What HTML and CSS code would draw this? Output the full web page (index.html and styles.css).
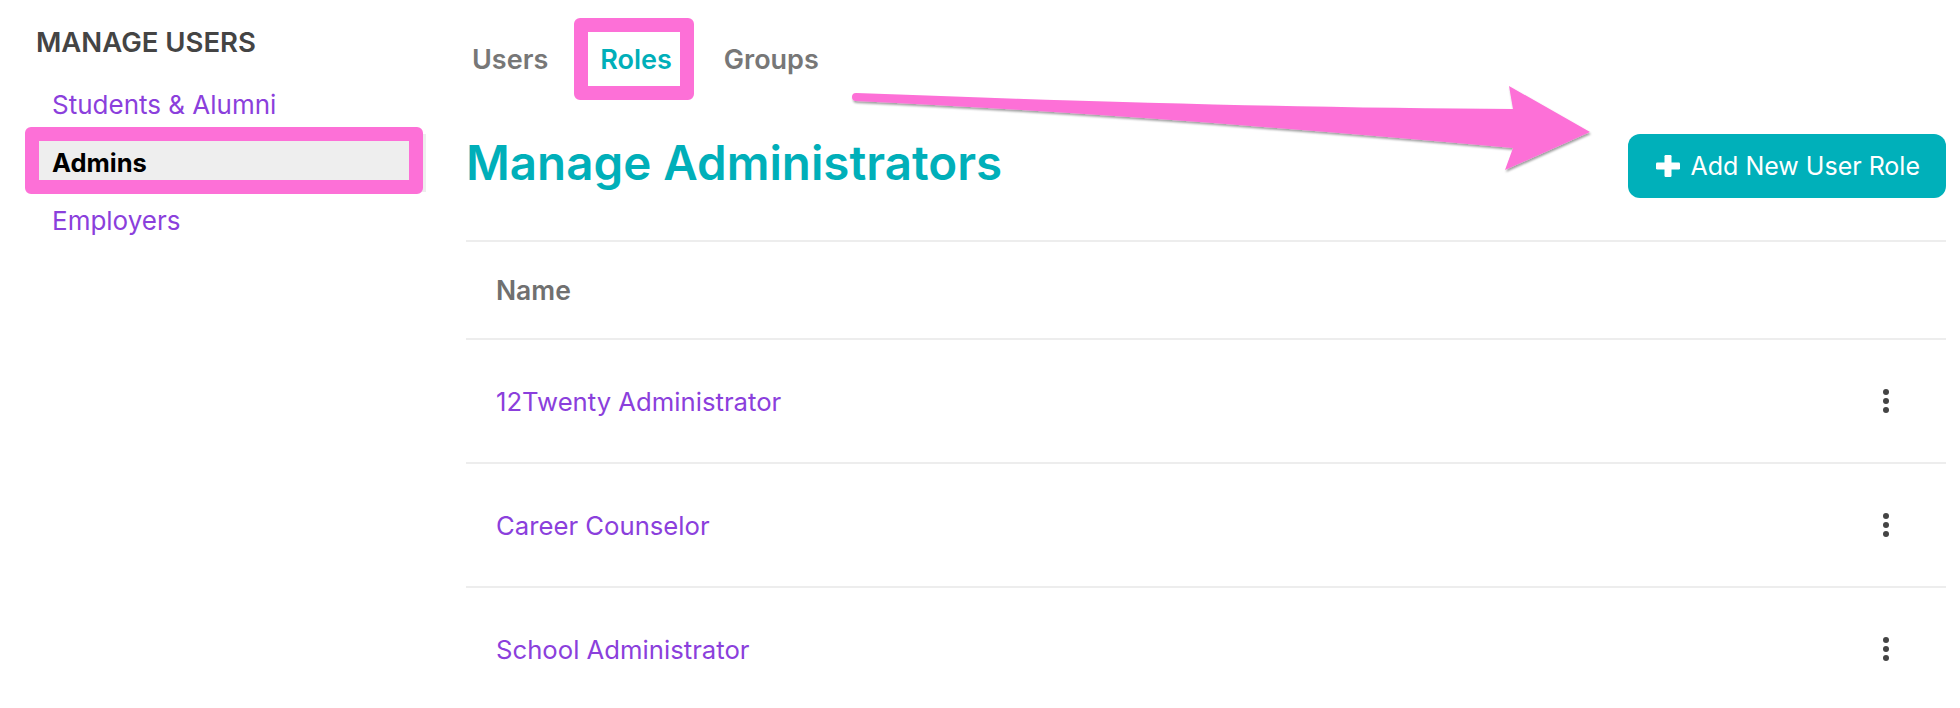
FILE: index.html
```html
<!DOCTYPE html>
<html lang="en">
<head>
<meta charset="utf-8">
<title>Manage Administrators</title>
<link rel="stylesheet" href="styles.css">
</head>
<body>
<div class="app">
  <aside class="sidebar">
    <h2 class="side-title">MANAGE USERS</h2>
    <nav class="side-nav">
      <a class="side-link" href="#">Students &amp; Alumni</a>
      <a class="side-link active" href="#">Admins</a>
      <a class="side-link" href="#">Employers</a>
    </nav>
  </aside>
  <main class="main">
    <nav class="tabs">
      <a class="tab" href="#">Users</a>
      <a class="tab active" href="#">Roles</a>
      <a class="tab" href="#">Groups</a>
    </nav>
    <div class="page-head">
      <h1 class="page-title">Manage Administrators</h1>
      <button class="btn-add" type="button">
        <svg class="plus" width="24" height="22" viewBox="0 0 24 22" aria-hidden="true">
          <rect x="0" y="7.5" width="24" height="7" rx="1.2" fill="#fff"/>
          <rect x="8.5" y="0" width="7" height="22" rx="1.2" fill="#fff"/>
        </svg>
        <span>Add New User Role</span>
      </button>
    </div>
    <div class="table">
      <div class="row row-head"><span class="col-name">Name</span></div>
      <div class="row"><a class="role-link" href="#">12Twenty Administrator</a><span class="kebab"><i></i><i></i><i></i></span></div>
      <div class="row"><a class="role-link" href="#">Career Counselor</a><span class="kebab"><i></i><i></i><i></i></span></div>
      <div class="row"><a class="role-link" href="#">School Administrator</a><span class="kebab"><i></i><i></i><i></i></span></div>
    </div>
  </main>

  <div class="callout callout-admins"></div>
  <div class="callout callout-roles"></div>
  <svg class="arrow" width="1960" height="708" viewBox="0 0 1960 708" aria-hidden="true">
    <defs>
      <filter id="sh" x="-5%" y="-50%" width="110%" height="200%">
        <feDropShadow dx="1" dy="2" stdDeviation="1.3" flood-color="#000" flood-opacity="0.38"/>
      </filter>
    </defs>
    <path filter="url(#sh)" fill="#fd70d7"
      d="M 856 93 Q 1250 108 1513 109 L 1509 86 L 1590 132 L 1505 170 L 1513 148 Q 1150 115 856 101 A 4 4 0 0 1 856 93 Z"/>
  </svg>
</div>
</body>
</html>
```

FILE: styles.css
```css
* { box-sizing: border-box; }

html, body {
  margin: 0;
  padding: 0;
  background: #fff;
}

body {
  font-family: "Inter", "Noto Sans", "Liberation Sans", sans-serif;
  width: 1960px;
  height: 708px;
  overflow: hidden;
}

.app {
  position: relative;
  display: flex;
  width: 1960px;
  height: 708px;
}

/* Sidebar */
.sidebar {
  flex: none;
  width: 440px;
  padding-top: 27px;
}

.side-title {
  margin: 0 0 19px 36px;
  font-size: 27.5px;
  line-height: 30px;
  font-weight: 600;
  color: #444;
  letter-spacing: 0;
}

.side-nav {
  display: flex;
  flex-direction: column;
  margin-left: 30px;
  width: 396px;
}

.side-link {
  display: block;
  height: 58px;
  line-height: 58px;
  padding-left: 22px;
  font-size: 26px;
  color: #8b3fdc;
  text-decoration: none;
}

.side-link.active {
  background: #eeeeee;
  color: #000;
  font-weight: 700;
  font-size: 25.5px;
}

/* Main */
.main {
  flex: 1;
  margin-left: 26px;
  margin-right: 14px;
  min-width: 0;
}

.tabs {
  display: flex;
  align-items: center;
  gap: 52px;
  height: 82px;
  margin-top: 18px;
  padding-left: 6px;
}

.tab {
  font-size: 27px;
  font-weight: 600;
  color: #777;
  text-decoration: none;
}

.tab.active { color: #00afb9; }

.page-head {
  display: flex;
  align-items: center;
  justify-content: space-between;
  height: 64px;
  margin-top: 34px;
  margin-bottom: 42px;
}

.page-title {
  margin: 0 0 6px 0;
  font-size: 47.5px;
  line-height: 58px;
  font-weight: 600;
  color: #00afb9;
}

.btn-add {
  display: flex;
  align-items: center;
  gap: 10px;
  height: 64px;
  padding: 0 26px 0 28px;
  border: none;
  border-radius: 12px;
  background: #00b0ba;
  color: #fff;
  font-family: inherit;
  font-size: 25px;
  font-weight: 400;
}

.plus { display: block; flex: none; }

/* Table */
.table { display: flex; flex-direction: column; }

.row {
  display: flex;
  align-items: center;
  height: 124px;
  padding-left: 30px;
  border-top: 2px solid #ededed;
}

.row-head { height: 98px; }

.col-name {
  font-size: 26.5px;
  font-weight: 600;
  color: #707070;
}

.role-link {
  font-size: 25.7px;
  color: #8b3fdc;
  text-decoration: none;
}

.kebab {
  display: flex;
  flex-direction: column;
  gap: 3px;
  margin-left: auto;
  margin-right: 57px;
}

.kebab i {
  display: block;
  width: 6px;
  height: 6px;
  border-radius: 50%;
  background: #444;
}

/* Annotation overlays */
.callout {
  position: absolute;
  border: 14px solid #fd70d7;
  border-radius: 6px;
  pointer-events: none;
}

.callout-admins {
  left: 25px;
  top: 127px;
  width: 398px;
  height: 67px;
}

.callout-roles {
  left: 574px;
  top: 18px;
  width: 120px;
  height: 82px;
}

.arrow {
  position: absolute;
  left: 0;
  top: 0;
  pointer-events: none;
}
```
